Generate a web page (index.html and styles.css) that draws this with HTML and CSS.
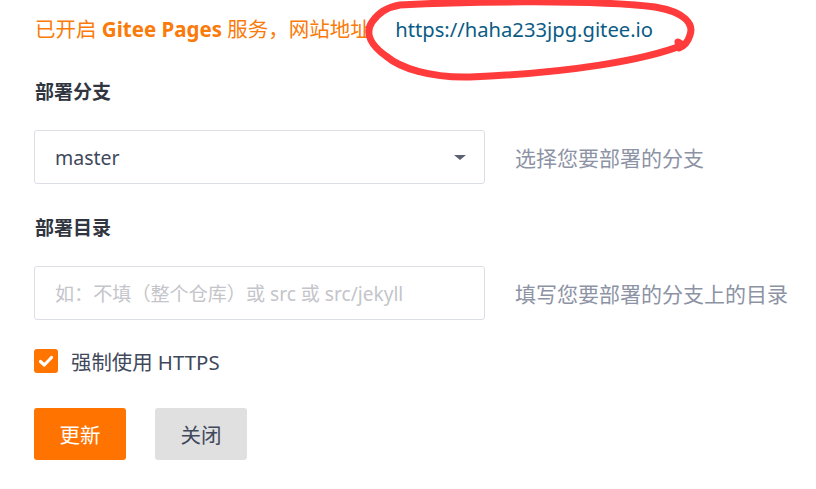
FILE: index.html
```html
<!DOCTYPE html>
<html lang="zh-CN">
<head>
<meta charset="utf-8">
<title>Gitee Pages</title>
<link rel="stylesheet" href="styles.css">
</head>
<body>
<div class="page">
  <div class="notice">
    <span class="notice-text">已开启 <b>Gitee Pages</b> 服务，网站地址</span>
    <a class="notice-link" href="#">https://haha233jpg.gitee.io</a>
  </div>

  <div class="field-label">部署分支</div>
  <div class="field-row">
    <div class="select">
      <span class="select-value">master</span>
      <span class="caret"></span>
    </div>
    <span class="hint">选择您要部署的分支</span>
  </div>

  <div class="field-label second">部署目录</div>
  <div class="field-row">
    <div class="input">
      <span class="placeholder">如：不填（整个仓库）或 src 或 src/jekyll</span>
    </div>
    <span class="hint">填写您要部署的分支上的目录</span>
  </div>

  <div class="check-row">
    <span class="checkbox">
      <svg width="24" height="24" viewBox="0 0 24 24"><path d="M6.5 12.5 L10.3 16 L17.5 8.5" fill="none" stroke="#fff" stroke-width="3.2" stroke-linecap="round" stroke-linejoin="round"/></svg>
    </span>
    <span class="check-label">强制使用 HTTPS</span>
  </div>

  <div class="actions">
    <button class="btn btn-primary">更新</button>
    <button class="btn btn-default">关闭</button>
  </div>

  <svg class="annotation" width="816" height="100" viewBox="0 0 816 100">
    <path d="M400 5 C 470 1, 600 0, 655 7 C 685 12, 694 24, 690 35 C 688 42, 684 46, 679 48 L 678 42 L 683 45 C 645 60, 570 73, 470 77 C 430 78, 400 68, 386 56 C 372 46, 364 34, 372 22 C 378 13, 388 7, 400 5 Z" fill="none" stroke="#ff3b3b" stroke-width="7" stroke-linejoin="round" stroke-linecap="round"/>
  </svg>
</div>
</body>
</html>
```

FILE: styles.css
```css
html, body {
  margin: 0;
  padding: 0;
  background: #ffffff;
}

body {
  font-family: "Noto Sans", "Noto Sans CJK SC", sans-serif;
  color: #40485b;
}

.page {
  position: relative;
  padding: 15px 0 0 34px;
  width: 782px;
  height: 474px;
}

.notice {
  height: 28px;
  line-height: 28px;
  font-size: 20.5px;
  white-space: nowrap;
}

.notice-text {
  color: #fa7a0a;
  padding-left: 1px;
}

.notice-text b {
  font-weight: 700;
}

.notice-link {
  color: #0b5c85;
  text-decoration: none;
  margin-left: 19px;
  font-size: 20.2px;
}

.field-label {
  margin-top: 35px;
  height: 28px;
  line-height: 28px;
  font-size: 19px;
  font-weight: 700;
  color: #303540;
  padding-left: 1px;
}

.field-label.second {
  margin-top: 30px;
}

.field-row {
  display: flex;
  align-items: center;
  gap: 30px;
  margin-top: 24px;
}

.select,
.input {
  box-sizing: border-box;
  width: 451px;
  height: 54px;
  border: 1px solid #dcdee5;
  border-radius: 3px;
  display: flex;
  align-items: center;
  padding: 0 18px 0 20px;
}

.select {
  justify-content: space-between;
}

.select-value {
  font-size: 19.5px;
  color: #40485b;
}

.caret {
  width: 0;
  height: 0;
  border-left: 6px solid transparent;
  border-right: 6px solid transparent;
  border-top: 5px solid #5b6172;
}

.placeholder {
  font-size: 19.1px;
  color: #c4c5ca;
  white-space: nowrap;
}

.hint {
  font-size: 21px;
  color: #8d93a5;
  white-space: nowrap;
}

.check-row {
  display: flex;
  align-items: center;
  gap: 13px;
  margin-top: 29px;
  height: 24px;
}

.checkbox {
  width: 24px;
  height: 24px;
  border-radius: 3px;
  background: #ff7500;
  display: flex;
}

.check-label {
  font-size: 20.4px;
  color: #40485b;
}

.actions {
  display: flex;
  gap: 29px;
  margin-top: 35px;
}

.btn {
  width: 92px;
  height: 52px;
  border: none;
  border-radius: 3px;
  font-family: inherit;
  font-size: 20.5px;
  padding: 0;
  cursor: pointer;
}

.btn-primary {
  background: #ff7300;
  color: #ffffff;
}

.btn-default {
  background: #e0e0e0;
  color: #40485b;
}

.annotation {
  position: absolute;
  left: 0;
  top: 0;
  pointer-events: none;
}
```
